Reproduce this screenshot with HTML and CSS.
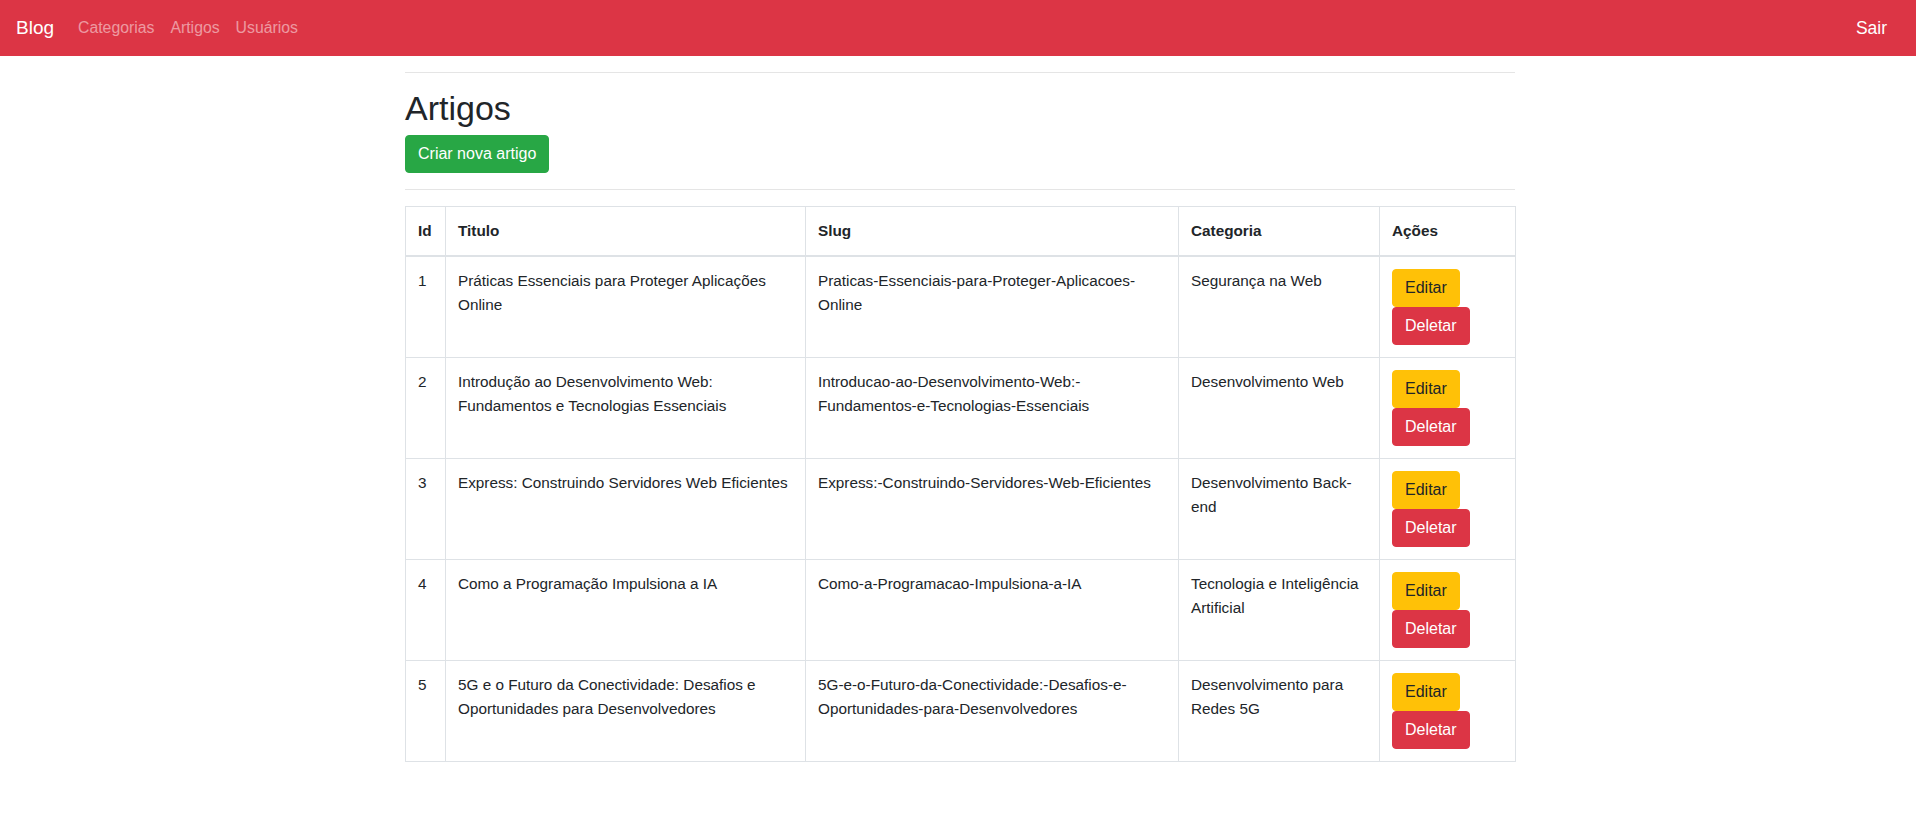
FILE: index.html
```html
<!DOCTYPE html>
<html lang="pt-BR">
<head>
<meta charset="utf-8">
<title>Artigos</title>
<link rel="stylesheet" href="styles.css">
</head>
<body>
<nav class="navbar">
  <a class="brand" href="#">Blog</a>
  <ul class="nav">
    <li><a class="nav-link" href="#">Categorias</a></li>
    <li><a class="nav-link" href="#">Artigos</a></li>
    <li><a class="nav-link" href="#">Usuários</a></li>
  </ul>
  <a class="brand brand-right" href="#">Sair</a>
</nav>
<main class="container">
  <hr class="rule">
  <h2 class="title">Artigos</h2>
  <a class="btn btn-success" href="#">Criar nova artigo</a>
  <hr class="rule">
  <table class="table">
    <colgroup>
      <col class="c-id">
      <col class="c-title">
      <col class="c-slug">
      <col class="c-cat">
      <col class="c-act">
    </colgroup>
    <thead>
      <tr><th>Id</th><th>Titulo</th><th>Slug</th><th>Categoria</th><th>Ações</th></tr>
    </thead>
    <tbody>
      <tr>
        <td>1</td>
        <td>Práticas Essenciais para Proteger Aplicações Online</td>
        <td>Praticas-Essenciais-para-Proteger-Aplicacoes-Online</td>
        <td>Segurança na Web</td>
        <td><div class="actions"><a class="btn btn-warning" href="#">Editar</a><button class="btn btn-danger">Deletar</button></div></td>
      </tr>
      <tr>
        <td>2</td>
        <td>Introdução ao Desenvolvimento Web: Fundamentos e Tecnologias Essenciais</td>
        <td>Introducao-ao-Desenvolvimento-Web:-Fundamentos-e-Tecnologias-Essenciais</td>
        <td>Desenvolvimento Web</td>
        <td><div class="actions"><a class="btn btn-warning" href="#">Editar</a><button class="btn btn-danger">Deletar</button></div></td>
      </tr>
      <tr>
        <td>3</td>
        <td>Express: Construindo Servidores Web Eficientes</td>
        <td>Express:-Construindo-Servidores-Web-Eficientes</td>
        <td>Desenvolvimento Back-end</td>
        <td><div class="actions"><a class="btn btn-warning" href="#">Editar</a><button class="btn btn-danger">Deletar</button></div></td>
      </tr>
      <tr>
        <td>4</td>
        <td>Como a Programação Impulsiona a IA</td>
        <td>Como-a-Programacao-Impulsiona-a-IA</td>
        <td>Tecnologia e Inteligência Artificial</td>
        <td><div class="actions"><a class="btn btn-warning" href="#">Editar</a><button class="btn btn-danger">Deletar</button></div></td>
      </tr>
      <tr>
        <td>5</td>
        <td>5G e o Futuro da Conectividade: Desafios e Oportunidades para Desenvolvedores</td>
        <td>5G-e-o-Futuro-da-Conectividade:-Desafios-e-Oportunidades-para-Desenvolvedores</td>
        <td>Desenvolvimento para Redes 5G</td>
        <td><div class="actions"><a class="btn btn-warning" href="#">Editar</a><button class="btn btn-danger">Deletar</button></div></td>
      </tr>
    </tbody>
  </table>
</main>
</body>
</html>
```
FILE: styles.css
```css
* { box-sizing: border-box; }
html, body { margin: 0; padding: 0; }
body {
  font-family: "Liberation Sans", Arial, sans-serif;
  font-size: 15.3px;
  line-height: 24px;
  color: #212529;
  background: #fff;
}
a { text-decoration: none; }

.navbar {
  display: flex;
  align-items: center;
  height: 56px;
  padding: 8px 16px;
  background: #dc3545;
}
.brand {
  display: inline-block;
  padding: 5px 0;
  margin-right: 16px;
  font-size: 19px;
  line-height: 30px;
  color: #fff;
  white-space: nowrap;
}
.brand-right {
  margin-left: auto;
  margin-right: 13px;
  font-size: 17.5px;
}
.nav {
  display: flex;
  list-style: none;
  margin: 0;
  padding: 0;
}
.nav-link {
  display: block;
  padding: 8px;
  font-size: 15.8px;
  line-height: 24px;
  color: rgba(255, 255, 255, 0.5);
}

.container {
  width: 1110px;
  margin-left: calc(50% - 553px);
}
.rule {
  margin: 16px 0;
  border: 0;
  border-top: 1px solid rgba(0, 0, 0, 0.1);
  height: 0;
}
.title {
  margin: 0 0 8px;
  font-size: 34px;
  line-height: 38.4px;
  font-weight: 500;
}

.btn {
  display: inline-block;
  padding: 6px 12px;
  font-family: inherit;
  font-size: 16px;
  line-height: 24px;
  border: 1px solid transparent;
  border-radius: 4px;
  cursor: pointer;
  white-space: nowrap;
}
.btn-success { background: #28a745; border-color: #28a745; color: #fff; }
.btn-warning { background: #ffc107; border-color: #ffc107; color: #212529; }
.btn-danger { background: #dc3545; border-color: #dc3545; color: #fff; }

.table {
  width: 1110px;
  table-layout: fixed;
  border-collapse: collapse;
  border: 1px solid #dee2e6;
  margin-bottom: 16px;
}
.c-id { width: 40px; }
.c-title { width: 360px; }
.c-slug { width: 373px; }
.c-cat { width: 201px; }
.c-act { width: 136px; }
.table th, .table td {
  padding: 12px;
  border: 1px solid #dee2e6;
  vertical-align: top;
  text-align: left;
}
.table thead th {
  vertical-align: bottom;
  border-bottom: 2px solid #dee2e6;
  font-weight: bold;
}
.actions {
  display: flex;
  flex-direction: column;
  align-items: flex-start;
}
```
